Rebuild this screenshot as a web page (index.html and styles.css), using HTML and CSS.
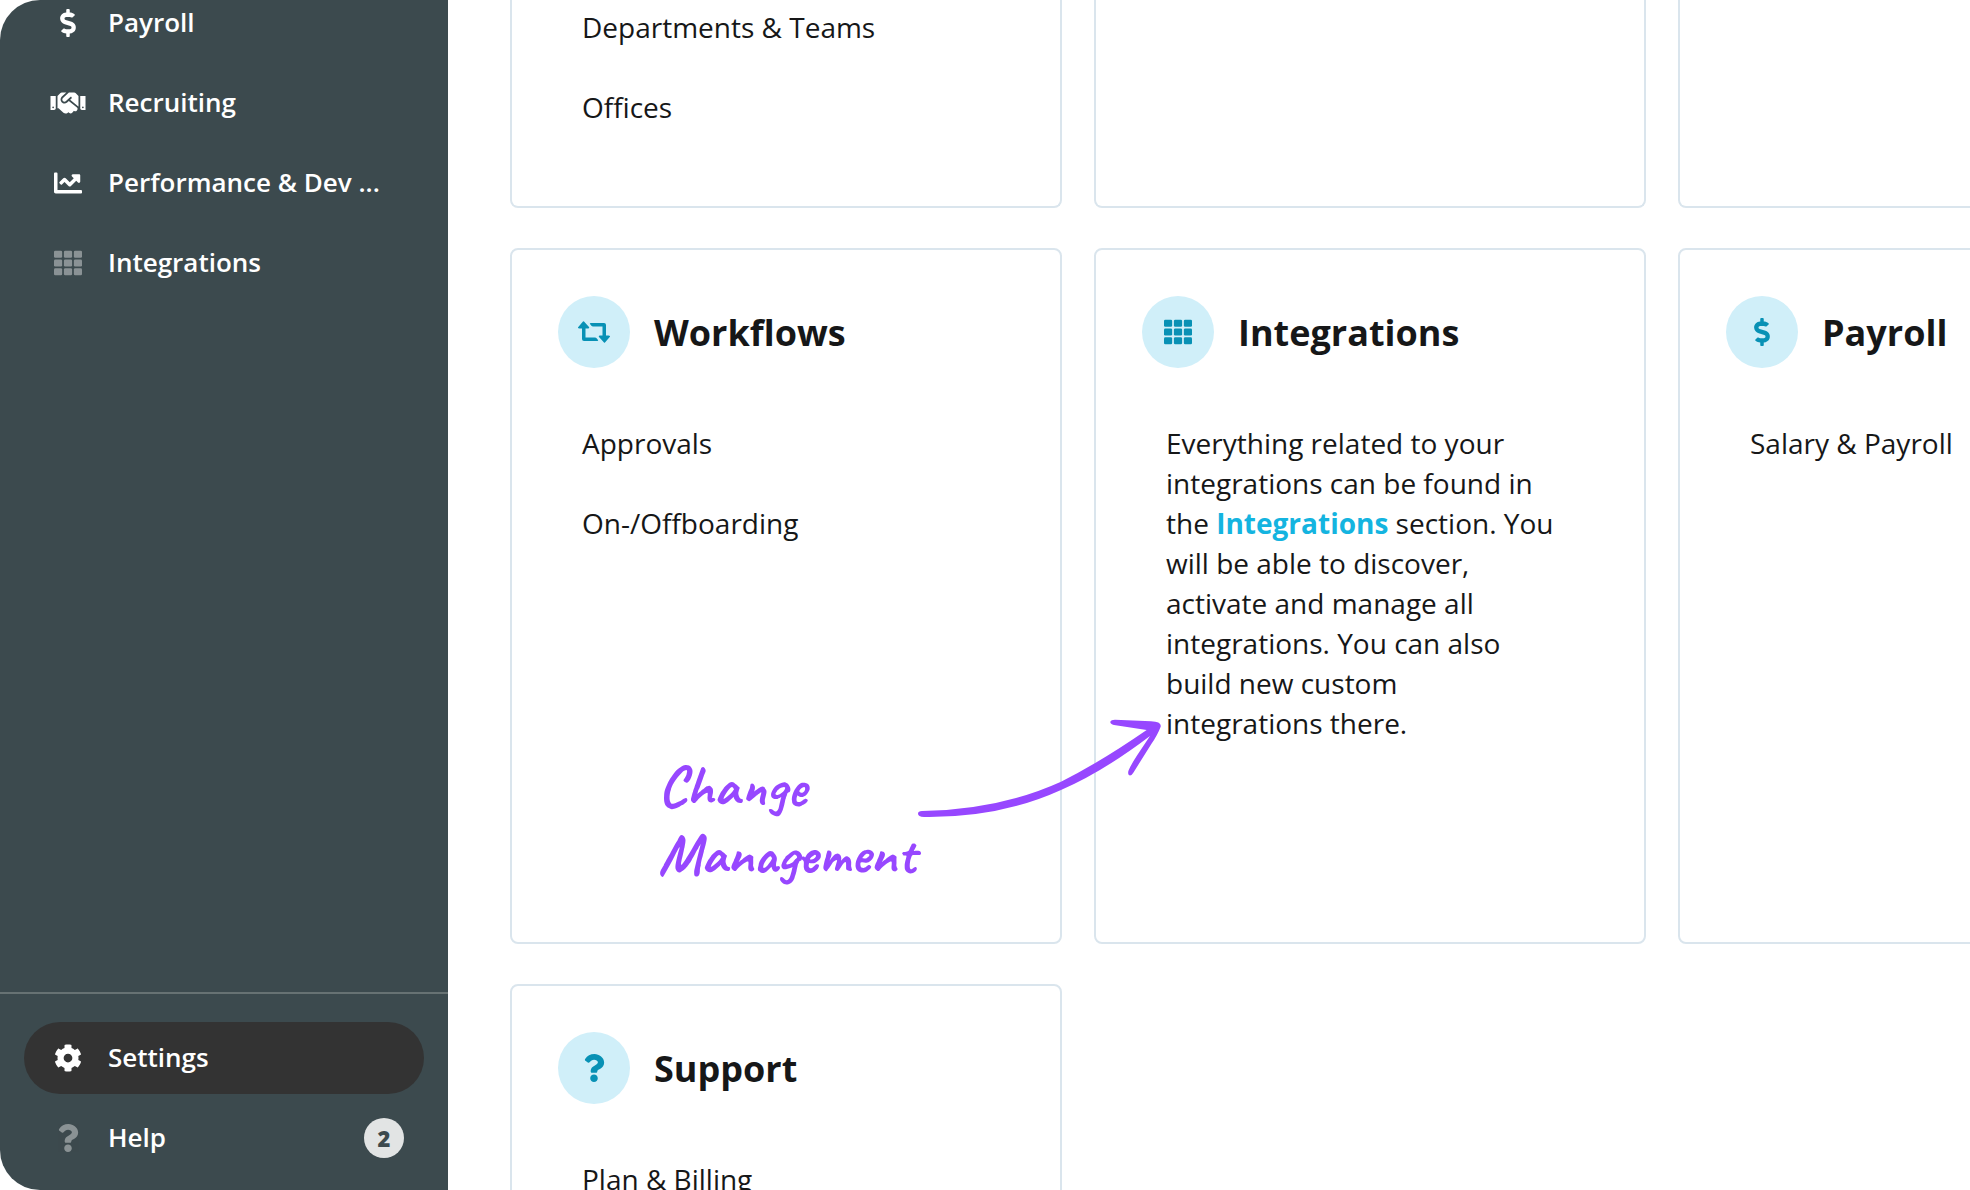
FILE: index.html
```html
<!DOCTYPE html>
<html lang="en">
<head>
<meta charset="utf-8">
<meta name="viewport" content="width=device-width, initial-scale=1">
<title>Settings</title>
<link rel="stylesheet" href="styles.css">
</head>
<body>
<svg class="sprite" aria-hidden="true">
  <symbol id="i-dollar" viewBox="0 0 288 512"><path d="M209.2 233.4l-108-31.6C88.7 198.2 80 186.5 80 173.5c0-16.3 13.2-29.5 29.5-29.5h66.3c12.2 0 24.2 3.7 34.2 10.5 6.1 4.1 14.3 3.1 19.5-2l34.8-34c7.1-6.9 6.1-18.4-1.8-24.5C238 74.8 207.4 64.1 176 64V16c0-8.8-7.2-16-16-16h-32c-8.8 0-16 7.2-16 16v48h-2.5C45.8 64-5.4 118.7.5 183.6c4.2 46.1 39.4 83.6 83.8 96.6l102.5 30c12.5 3.7 21.2 15.3 21.2 28.3 0 16.3-13.2 29.5-29.5 29.5h-66.3C100 368 88 364.3 78 357.5c-6.1-4.1-14.3-3.1-19.5 2l-34.8 34c-7.1 6.9-6.1 18.4 1.8 24.5 24.5 19.2 55.1 29.9 86.5 30v48c0 8.8 7.2 16 16 16h32c8.8 0 16-7.2 16-16v-48.2c46.6-.9 90.3-28.6 105.7-72.7 21.5-61.6-14.6-124.8-72.5-141.7z"/></symbol>
  <symbol id="i-handshake" viewBox="0 0 640 512"><path d="M434.7 64h-85.9c-8 0-15.7 3-21.6 8.4l-98.3 90c-.1.1-.2.3-.3.4-16.6 15.6-16.3 40.5-2.1 56 12.7 13.9 39.4 17.6 56.1 2.7.1-.1.3-.1.4-.2l79.9-73.2c6.5-5.9 16.7-5.5 22.6 1 6 6.5 5.5 16.6-1 22.6l-26.1 23.9L504 313.8c2.9 2.4 5.5 5 7.9 7.7V128l-54.6-54.6c-5.9-6-14.1-9.4-22.6-9.4zM544 128.2v223.9c0 17.7 14.3 32 32 32h64V128.2h-96zm48 223.9c-8.8 0-16-7.2-16-16s7.2-16 16-16 16 7.2 16 16-7.2 16-16 16zM0 384h64c17.7 0 32-14.3 32-32V128.2H0V384zm48-63.9c8.8 0 16 7.2 16 16s-7.2 16-16 16-16-7.2-16-16c0-8.9 7.2-16 16-16zm435.9 18.6L334.6 217.5l-30 27.5c-29.7 27.1-75.2 24.5-101.7-4.4-26.9-29.4-24.8-74.9 4.4-101.7L289.1 64h-83.8c-8.5 0-16.6 3.4-22.6 9.4L128 128v223.9h18.3l90.5 81.9c27.4 22.3 67.7 18.1 90-9.3l.2-.2 17.9 15.5c15.9 13 39.4 10.5 52.3-5.4l31.4-38.6 5.4 4.4c13.7 11.1 33.9 9.1 45-4.7l9.5-11.7c11.2-13.8 9.1-33.9-4.6-45.1z"/></symbol>
  <symbol id="i-chart" viewBox="0 0 512 512"><path d="M496 384H64V80c0-8.84-7.16-16-16-16H16C7.16 64 0 71.16 0 80v336c0 17.67 14.33 32 32 32h464c8.84 0 16-7.16 16-16v-32c0-8.84-7.16-16-16-16zM464 96H345.94c-21.38 0-32.09 25.85-16.97 40.97l32.4 32.4L288 242.75l-73.37-73.37c-12.5-12.5-32.76-12.5-45.25 0l-68.69 68.69c-6.25 6.25-6.25 16.38 0 22.63l22.62 22.62c6.25 6.25 16.38 6.25 22.63 0L192 237.25l73.37 73.37c12.5 12.5 32.76 12.5 45.25 0l96-96 32.4 32.4c15.12 15.12 40.97 4.41 40.97-16.97V112c.01-8.84-7.15-16-15.99-16z"/></symbol>
  <symbol id="i-grid" viewBox="0 0 512 512">
    <rect x="0" y="32" width="149" height="128" rx="24"/><rect x="181" y="32" width="150" height="128" rx="24"/><rect x="363" y="32" width="149" height="128" rx="24"/>
    <rect x="0" y="192" width="149" height="128" rx="24"/><rect x="181" y="192" width="150" height="128" rx="24"/><rect x="363" y="192" width="149" height="128" rx="24"/>
    <rect x="0" y="352" width="149" height="128" rx="24"/><rect x="181" y="352" width="150" height="128" rx="24"/><rect x="363" y="352" width="149" height="128" rx="24"/>
  </symbol>
  <symbol id="i-cog" viewBox="0 0 512 512"><path d="M487.4 315.7l-42.6-24.6c4.3-23.2 4.3-47 0-70.2l42.6-24.6c4.9-2.8 7.1-8.6 5.5-14-11.1-35.6-30-67.8-54.7-94.6-3.8-4.1-10-5.1-14.8-2.3L380.8 110c-17.9-15.4-38.5-27.3-60.8-35.1V25.8c0-5.6-3.9-10.5-9.4-11.7-36.7-8.2-74.3-7.8-109.2 0-5.5 1.2-9.4 6.1-9.4 11.7V75c-22.2 7.9-42.8 19.8-60.8 35.1L88.7 85.5c-4.9-2.8-11-1.9-14.8 2.3-24.7 26.7-43.6 58.9-54.7 94.6-1.7 5.4.6 11.2 5.5 14L67.3 221c-4.3 23.2-4.3 47 0 70.2l-42.6 24.6c-4.9 2.8-7.1 8.6-5.5 14 11.1 35.6 30 67.8 54.7 94.6 3.8 4.1 10 5.1 14.8 2.3l42.6-24.6c17.9 15.4 38.5 27.3 60.8 35.1v49.2c0 5.6 3.9 10.5 9.4 11.7 36.7 8.2 74.3 7.8 109.2 0 5.5-1.2 9.4-6.1 9.4-11.7v-49.2c22.2-7.9 42.8-19.8 60.8-35.1l42.6 24.6c4.9 2.8 11 1.9 14.8-2.3 24.7-26.7 43.6-58.9 54.7-94.6 1.5-5.5-.7-11.3-5.6-14.1zM256 336c-44.1 0-80-35.9-80-80s35.9-80 80-80 80 35.9 80 80-35.9 80-80 80z"/></symbol>
  <symbol id="i-question" viewBox="0 0 384 512"><path d="M202.021 0C122.202 0 70.503 32.703 29.914 91.026c-7.363 10.58-5.093 25.086 5.178 32.874l43.138 32.709c10.373 7.865 25.132 6.026 33.253-4.148 25.049-31.381 43.63-49.449 82.757-49.449 30.764 0 68.816 19.799 68.816 49.631 0 22.552-18.617 34.134-48.993 51.164-35.423 19.86-82.299 44.576-82.299 106.405V320c0 13.255 10.745 24 24 24h72.471c13.255 0 24-10.745 24-24v-5.773c0-42.86 125.268-44.645 125.268-160.627C377.504 66.256 286.902 0 202.021 0zM192 373.459c-38.196 0-69.271 31.075-69.271 69.271 0 38.195 31.075 69.27 69.271 69.27s69.271-31.075 69.271-69.271-31.075-69.27-69.271-69.27z"/></symbol>
  <symbol id="i-retweet" viewBox="0 0 32 22"><path d="M6 .5 11 6q.8 1.500-1 1.500H7.500V16.500H17q1 0 1.600.8l1.400 1.700q.5.900-.6.900H6q-2 0-2-2V7.500H1.500Q-.8 7.500 .3 6L5 .5q.5-.500 1 0z"/><path d="M26 21.500 21 16q-.8-1.500 1-1.500H24.500V5.500H15q-1 0-1.600-.8L12 3q-.5-.9.600-.9H26q2 0 2 2V14.500H30.500Q32.800 14.500 31.700 16L27 21.500q-.5.500-1 0z"/></symbol>
</svg>

<div class="app">
  <aside class="sidebar">
    <nav class="nav nav--main" aria-label="Main">
      <a class="nav__item" href="#"><svg class="icon"><use href="#i-dollar"/></svg><span class="nav__label">Payroll</span></a>
      <a class="nav__item" href="#"><svg class="icon icon--wide"><use href="#i-handshake"/></svg><span class="nav__label">Recruiting</span></a>
      <a class="nav__item" href="#"><svg class="icon"><use href="#i-chart"/></svg><span class="nav__label">Performance &amp; Dev ...</span></a>
      <a class="nav__item" href="#"><svg class="icon icon--muted"><use href="#i-grid"/></svg><span class="nav__label">Integrations</span></a>
    </nav>
    <nav class="nav nav--footer" aria-label="Secondary">
      <a class="nav__item nav__item--active" href="#" aria-current="page"><svg class="icon"><use href="#i-cog"/></svg><span class="nav__label">Settings</span></a>
      <a class="nav__item" href="#"><svg class="icon icon--muted"><use href="#i-question"/></svg><span class="nav__label">Help</span><span class="badge">2</span></a>
    </nav>
  </aside>

  <main class="content">
    <div class="grid">
      <section class="card card--cut">
        <ul class="links">
          <li><a href="#">Departments &amp; Teams</a></li>
          <li><a href="#">Offices</a></li>
        </ul>
      </section>
      <section class="card card--cut"></section>
      <section class="card card--cut"></section>

      <section class="card card--noted">
        <header class="card__header"><span class="disc"><svg class="icon icon--retweet"><use href="#i-retweet"/></svg></span><h2>Workflows</h2></header>
        <ul class="links">
          <li><a href="#">Approvals</a></li>
          <li><a href="#">On-/Offboarding</a></li>
        </ul>
        <div class="note">
          <p class="note__text">Change<br>Management</p>
          <svg class="note__arrow" viewBox="66 57 744 300" aria-hidden="true"><path d="M78 333Q310 329 495 245Q610 188 752 90L654 75Q642 72 643 65Q645 59 657 59L765 64Q797 65 794 80Q785 104 766 132L712 218Q706 228 700 226Q694 222 698 211Q704 196 722 168L762 108Q620 216 495 270Q310 354 84 351Q66 350 66 341Q66 334 78 333Z"/></svg>
        </div>
      </section>
      <section class="card">
        <header class="card__header"><span class="disc"><svg class="icon"><use href="#i-grid"/></svg></span><h2>Integrations</h2></header>
        <p class="card__text">Everything related to your integrations can be found in the <a href="#">Integrations</a> section. You will be able to discover, activate and manage all integrations. You can also build new custom integrations there.</p>
      </section>
      <section class="card">
        <header class="card__header"><span class="disc"><svg class="icon"><use href="#i-dollar"/></svg></span><h2>Payroll</h2></header>
        <ul class="links">
          <li><a href="#">Salary &amp; Payroll</a></li>
        </ul>
      </section>

      <section class="card">
        <header class="card__header"><span class="disc"><svg class="icon"><use href="#i-question"/></svg></span><h2>Support</h2></header>
        <ul class="links">
          <li><a href="#">Plan &amp; Billing</a></li>
        </ul>
      </section>
    </div>
  </main>
</div>
</body>
</html>
```
FILE: styles.css
```css
* { box-sizing: border-box; }

body {
  margin: 0;
  background: #fff;
  color: #161718;
  font: 28px/40px "Open Sans", sans-serif;
}

h2, p, ul { margin: 0; padding: 0; }
ul { list-style: none; }
a { color: inherit; text-decoration: none; }

.sprite { display: none; }

.icon { width: 28px; height: 28px; fill: currentColor; flex: none; }
.icon--wide { width: 36px; }
.icon--retweet { width: 32px; height: 22px; }
.icon--muted { opacity: 0.4; }

.app { display: flex; height: 100vh; overflow: hidden; }

.sidebar {
  display: flex;
  flex: none;
  flex-direction: column;
  justify-content: space-between;
  width: 448px;
  overflow: hidden;
  border-radius: 40px 0 0 40px;
  background: #3c4a4e;
  color: #fff;
  font-size: 26px;
  font-weight: 600;
}

.nav { display: flex; flex-direction: column; gap: 8px; padding: 0 24px; }
.nav--main { margin-top: -13px; }
.nav--footer { padding: 28px 24px 16px; border-top: 2px solid #677273; }

.nav__item {
  display: grid;
  grid-template-columns: 40px 1fr auto;
  align-items: center;
  justify-items: start;
  column-gap: 20px;
  height: 72px;
  padding: 0 20px 0 24px;
  border-radius: 36px;
}
.nav__item .icon { justify-self: center; }
.nav__item--active { background: #333; }
.nav__label { padding-bottom: 2px; }

.badge {
  width: 40px;
  border-radius: 20px;
  background: #e2e4e4;
  color: #3c4a4e;
  font-size: 22px;
  font-weight: 800;
  text-align: center;
}

.content { flex: 1; min-width: 0; padding-left: 62px; overflow: hidden; }

.grid {
  display: grid;
  grid-template-columns: repeat(3, minmax(552px, 1fr));
  gap: 40px 32px;
}

.card {
  min-height: 696px;
  padding: 46px 46px 58px;
  border: 2px solid #dae5ed;
  border-radius: 8px;
}
.card--cut {
  min-height: 0;
  padding-top: 0;
  border-top: 0;
  border-radius: 0 0 8px 8px;
}
.card--cut .links { margin-top: -12px; }

.card__header { display: flex; align-items: center; gap: 24px; margin-bottom: 36px; }
.card__header h2 { padding-top: 2px; font-size: 36px; font-weight: 700; }

.disc {
  display: grid;
  place-items: center;
  width: 72px;
  height: 72px;
  border-radius: 50%;
  background: #d0eff9;
  color: #0891b5;
}

.links li, .card__text { padding: 19px 40px 21px 24px; }
.card__text a { color: #14b4e0; font-weight: 700; }

.card--noted { position: relative; }
.note {
  position: absolute;
  top: 502px;
  left: 146px;
  z-index: 1;
  color: #9747ff;
}
.note__text {
  font: 700 58px/68px Caveat, "Open Sans", cursive;
}
.note__arrow {
  position: absolute;
  top: -33px;
  left: 260px;
  width: 248px;
  height: 100px;
  fill: currentColor;
}
```
